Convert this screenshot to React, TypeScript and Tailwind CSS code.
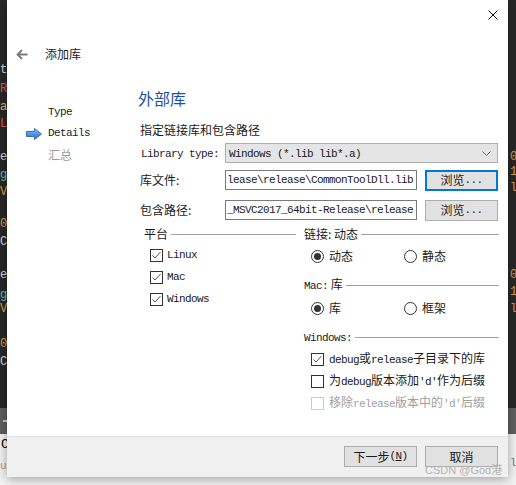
import React from 'react';

const MONO = "font-['Liberation_Mono','Noto_Sans_CJK_SC',monospace] text-[11px] tracking-[-0.6px]";

function M({ children }: { children: React.ReactNode }) {
    return <span className={MONO}>{children}</span>;
}

function CheckBox({ checked, disabled }: { checked?: boolean; disabled?: boolean }) {
    return (
        <span className={`w-[13px] h-[13px] shrink-0 border bg-white flex items-center justify-center ${disabled ? 'border-[#cccccc]' : 'border-[#333333]'}`}>
            {checked && (
                <svg width="11" height="11" viewBox="0 0 11 11">
                    <path d="M1.5 5.5 L4 8 L9.5 2" fill="none" stroke="#555" strokeWidth="1" />
                </svg>
            )}
        </span>
    );
}

function Radio({ checked }: { checked?: boolean }) {
    return (
        <span className="w-[13px] h-[13px] shrink-0 rounded-full border border-[#333333] bg-white flex items-center justify-center">
            {checked && <span className="w-[7px] h-[7px] rounded-full bg-[#333333]" />}
        </span>
    );
}

function GroupTitle({ children }: { children: React.ReactNode }) {
    return (
        <div className="h-[16px] flex items-center gap-[3px]">
            <span className="whitespace-nowrap">{children}</span>
            <div className="flex-1 h-px bg-[#a0a0a0]" />
        </div>
    );
}

function Button({ children, focused }: { children: React.ReactNode; focused?: boolean }) {
    return (
        <div
            className={`w-[73px] h-[21px] bg-[#e1e1e1] flex items-center justify-center ${focused ? 'border-2 border-[#0078d7]' : 'border border-[#adadad]'}`}
        >
            {children}
        </div>
    );
}

// bits of the code editor peeking out behind the dialog
const leftCode = [
    { y: 61, t: 't', c: 'text-[#d4d4d4]' },
    { y: 80, t: 'R', c: 'text-[#e5533c]' },
    { y: 98, t: 'a', c: 'text-[#d7ba7d]' },
    { y: 115, t: 'L', c: 'text-[#e5533c]' },
    { y: 148, t: 'e', c: 'text-[#d4d4d4]' },
    { y: 166, t: 'g', c: 'text-[#4ec9b0]' },
    { y: 183, t: 'V', c: 'text-[#d7a04a]' },
    { y: 215, t: '0', c: 'text-[#d7a04a]' },
    { y: 233, t: 'C', c: 'text-[#d4d4d4]' },
    { y: 266, t: 'e', c: 'text-[#d4d4d4]' },
    { y: 286, t: 'g', c: 'text-[#4ec9b0]' },
    { y: 300, t: 'V', c: 'text-[#d7a04a]' },
    { y: 335, t: '0', c: 'text-[#d7a04a]' },
    { y: 353, t: 'C', c: 'text-[#d4d4d4]' },
];

const rightCode = [
    { y: 148, t: '0' },
    { y: 163, t: '1' },
    { y: 179, t: 'l' },
    { y: 266, t: '0' },
    { y: 283, t: '1' },
    { y: 300, t: 'l' },
];

export default function App() {
    return (
        <div className="relative w-[516px] h-[485px] overflow-hidden bg-[#282828] font-['Noto_Sans_CJK_SC','Microsoft_YaHei',sans-serif] text-[12px] text-[#1a1a1a]">
            {/* editor background */}
            <div className="absolute left-0 right-0 top-[408px] h-[26px] bg-[#5f5f5f]">
                <div className="absolute left-[3px] top-[12px] w-[5px] h-[2px] bg-[#c8c8c8]" />
            </div>
            <div className="absolute left-0 right-0 top-[434px] bottom-0 bg-[#f2f2f2]">
                <span className={`absolute left-[1px] top-[1px] text-black ${MONO} text-[13px]`}>C</span>
                <span className={`absolute left-[0px] top-[24px] text-[#b0a070] ${MONO}`}>u</span>
                <span className={`absolute left-[510px] top-[21px] text-[#6a7a8a] ${MONO}`}>l</span>
            </div>
            {leftCode.map((l, i) => (
                <span key={i} className={`absolute left-[0px] ${MONO} text-[12px] ${l.c}`} style={{ top: l.y }}>
                    {l.t}
                </span>
            ))}
            {rightCode.map((l, i) => (
                <span key={i} className={`absolute left-[510px] text-[#d7a04a] ${MONO} text-[12px]`} style={{ top: l.y }}>
                    {l.t}
                </span>
            ))}

            {/* dialog */}
            <div className="absolute left-[7px] top-0 w-[501px] h-[477px] bg-white flex flex-col shadow-[0_2px_10px_rgba(0,0,0,0.35)]">
                <div className="flex-1 flex flex-col">
                    <div className="h-[44px] flex justify-end items-start pt-[10px] pr-[10px]">
                        <svg width="10" height="10" viewBox="0 0 10 10">
                            <path d="M0.5 0.5 L9.5 9.5 M9.5 0.5 L0.5 9.5" stroke="#111" strokeWidth="1" />
                        </svg>
                    </div>
                    <div className="h-[20px] flex items-center pl-[9px]">
                        <svg width="12" height="11" viewBox="0 0 12 11">
                            <path d="M11.5 5.5 H1.5 M6 1 L1.5 5.5 L6 10" fill="none" stroke="#7a7a7a" strokeWidth="1.8" />
                        </svg>
                        <span className="ml-[17px] text-[#222]">添加库</span>
                    </div>

                    <div className="flex">
                        <div className="w-[131px] pt-[38px] flex flex-col">
                            <div className="h-[21px] flex items-center pl-[41px]">
                                <M>Type</M>
                            </div>
                            <div className="h-[21px] flex items-center pl-[19px]">
                                <svg width="16" height="12" viewBox="0 0 16 12" className="mr-[6px]">
                                    <defs>
                                        <linearGradient id="ar" x1="0" y1="0" x2="0" y2="1">
                                            <stop offset="0" stopColor="#9cc8f5" />
                                            <stop offset="0.5" stopColor="#4f94e8" />
                                            <stop offset="1" stopColor="#2f6fd0" />
                                        </linearGradient>
                                    </defs>
                                    <path d="M0.5 3.5 H8.5 V0.5 L15.5 6 L8.5 11.5 V8.5 H0.5 Z" fill="url(#ar)" stroke="#3a6fb8" strokeWidth="1" />
                                </svg>
                                <M>Details</M>
                            </div>
                            <div className="h-[21px] flex items-center pl-[41px] text-[#9a9a9a]">汇总</div>
                        </div>

                        <div className="flex-1 flex flex-col pt-[23px] pr-[9px]">
                            <div className="h-[22px] leading-[22px] text-[16px] text-[#1d4ea3]">外部库</div>
                            <div className="mt-[12px] h-[18px] leading-[18px] pl-[2px]">指定链接库和包含路径</div>

                            <div className="mt-[4px] h-[20px] flex items-center pl-[3px]">
                                <div className="w-[84px]">
                                    <M>Library type:</M>
                                </div>
                                <div className="w-[273px] h-[20px] bg-[#e5e5e5] border border-[#adadad] flex items-center pl-[3px] pr-[6px]">
                                    <span className="flex-1">
                                        <M>Windows (*.lib lib*.a)</M>
                                    </span>
                                    <svg width="9" height="5" viewBox="0 0 9 5">
                                        <path d="M0.5 0.5 L4.5 4.5 L8.5 0.5" fill="none" stroke="#666" strokeWidth="1" />
                                    </svg>
                                </div>
                            </div>

                            <div className="mt-[7px] h-[20px] flex items-center pl-[2px]">
                                <div className="w-[85px]">库文件:</div>
                                <div className="w-[192px] h-[20px] border border-[#7a7a7a] flex items-center justify-end overflow-hidden whitespace-nowrap pr-[3px]">
                                    <M>{'lease\\release\\CommonToolDll.lib'}</M>
                                </div>
                                <div className="ml-[8px]">
                                    <Button focused>
                                        浏览<M>...</M>
                                    </Button>
                                </div>
                            </div>

                            <div className="mt-[10px] h-[20px] flex items-center pl-[2px]">
                                <div className="w-[85px]">包含路径:</div>
                                <div className="w-[192px] h-[20px] border border-[#7a7a7a] flex items-center justify-end overflow-hidden whitespace-nowrap pr-[3px]">
                                    <M>{'_MSVC2017_64bit-Release\\release'}</M>
                                </div>
                                <div className="ml-[8px]">
                                    <Button>
                                        浏览<M>...</M>
                                    </Button>
                                </div>
                            </div>

                            <div className="mt-[6px] ml-[6px] flex gap-[8px]">
                                <div className="w-[152px] flex flex-col">
                                    <GroupTitle>平台</GroupTitle>
                                    <div className="mt-[2px] pl-[6px] flex flex-col">
                                        {['Linux', 'Mac', 'Windows'].map((p) => (
                                            <div key={p} className="h-[22px] flex items-center gap-[4px]">
                                                <CheckBox checked />
                                                <M>{p}</M>
                                            </div>
                                        ))}
                                    </div>
                                </div>

                                <div className="w-[195px] flex flex-col">
                                    <GroupTitle>链接: 动态</GroupTitle>
                                    <div className="mt-[3px] h-[22px] flex items-center pl-[7px]">
                                        <div className="w-[93px] flex items-center gap-[5px]">
                                            <Radio checked />
                                            <span>动态</span>
                                        </div>
                                        <div className="flex items-center gap-[5px]">
                                            <Radio />
                                            <span>静态</span>
                                        </div>
                                    </div>

                                    <div className="mt-[10px]">
                                        <GroupTitle>
                                            <M>Mac:</M> 库
                                        </GroupTitle>
                                    </div>
                                    <div className="mt-[4px] h-[22px] flex items-center pl-[7px]">
                                        <div className="w-[93px] flex items-center gap-[5px]">
                                            <Radio checked />
                                            <span>库</span>
                                        </div>
                                        <div className="flex items-center gap-[5px]">
                                            <Radio />
                                            <span>框架</span>
                                        </div>
                                    </div>

                                    <div className="mt-[10px]">
                                        <GroupTitle>
                                            <M>Windows:</M>
                                        </GroupTitle>
                                    </div>
                                    <div className="mt-[3px] pl-[7px] flex flex-col">
                                        <div className="h-[22px] flex items-center gap-[5px]">
                                            <CheckBox checked />
                                            <span>
                                                <M>debug</M>或<M>release</M>子目录下的库
                                            </span>
                                        </div>
                                        <div className="h-[22px] flex items-center gap-[5px]">
                                            <CheckBox />
                                            <span>
                                                为<M>debug</M>版本添加<M>'d'</M>作为后缀
                                            </span>
                                        </div>
                                        <div className="h-[22px] flex items-center gap-[5px] text-[#a0a0a0]">
                                            <CheckBox disabled />
                                            <span>
                                                移除<M>release</M>版本中的<M>'d'</M>后缀
                                            </span>
                                        </div>
                                    </div>
                                </div>
                            </div>
                        </div>
                    </div>
                </div>

                <div className="h-[41px] border-t border-[#dfdfdf] bg-[#f0f0f0] flex justify-end items-start pt-[9px] pr-[10px] gap-[8px]">
                    <Button>
                        下一步<M>(</M>
                        <span className={`${MONO} underline`}>N</span>
                        <M>)</M>
                    </Button>
                    <Button>取消</Button>
                </div>
            </div>

            <div className="absolute left-[425px] top-[463px] text-[11px] leading-[14px] text-[#b4b4b4] font-['Liberation_Sans','Noto_Sans_CJK_SC',sans-serif]">
                CSDN @God港
            </div>
        </div>
    );
}
